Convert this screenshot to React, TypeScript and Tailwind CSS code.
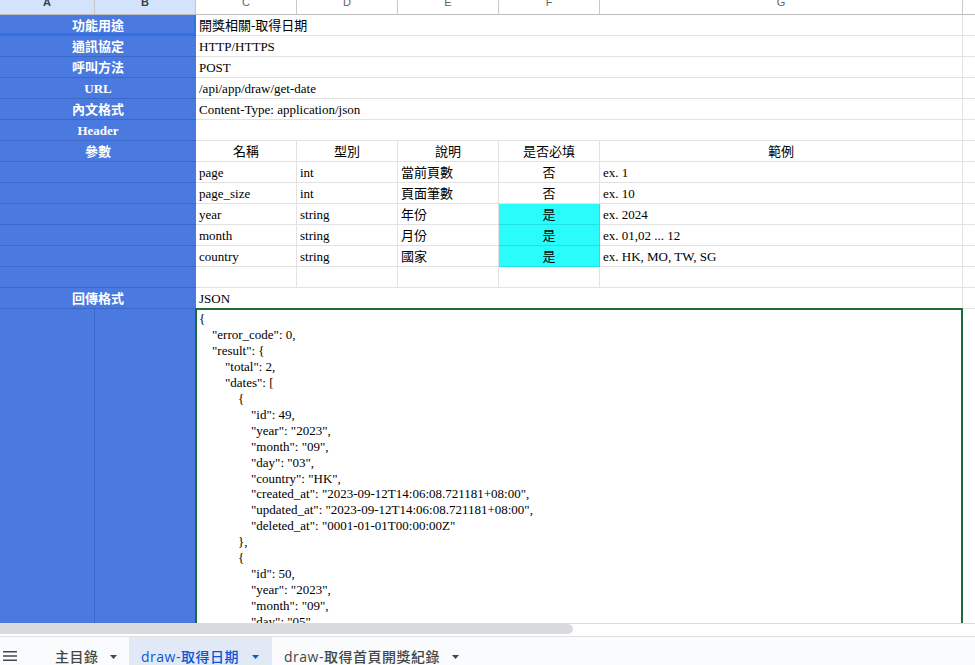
import React from "react";

const SERIF = "font-['Liberation_Serif','Noto_Sans_CJK_TC',serif]";

function Caret({ color }: { color: string }) {
  return (
    <svg width="7" height="4" viewBox="0 0 7 4" className="shrink-0">
      <path d="M0 0 L7 0 L3.5 4 Z" fill={color} />
    </svg>
  );
}

function HeadCell({ label, sel, last }: { label: string; sel?: boolean; last?: boolean }) {
  return (
    <div
      className={
        sel
          ? "overflow-hidden border-r border-b border-r-[#c7c7c7] border-b-[#bdbdbd] bg-[#d3e3fd] flex justify-center"
          : last
          ? "overflow-hidden border-b border-b-[#bdbdbd] bg-white flex justify-center"
          : "overflow-hidden border-r border-b border-r-[#c7c7c7] border-b-[#bdbdbd] bg-white flex justify-center"
      }
    >
      <span
        className={
          sel
            ? "-mt-[3px] block text-[11px] leading-[11px] font-semibold text-[#3c4043] font-['Liberation_Sans',sans-serif]"
            : "-mt-[3px] block text-[11px] leading-[11px] text-[#5f6368] font-['Liberation_Sans',sans-serif]"
        }
      >
        {label}
      </span>
    </div>
  );
}

function Label({ text, sel }: { text?: string; sel?: boolean }) {
  return (
    <div
      className={
        sel
          ? "col-span-2 overflow-hidden whitespace-nowrap bg-[#4a7adf] border-b border-[#3c68c7] text-white font-bold text-center text-[13px] leading-[16px] pt-[3px] shadow-[inset_0_-2px_0_#3370e4,inset_-2px_0_0_#3370e4]"
          : "col-span-2 overflow-hidden whitespace-nowrap bg-[#4a7adf] border-b border-[#3c68c7] text-white font-bold text-center text-[13px] leading-[16px] pt-[3px]"
      }
    >
      {text}
    </div>
  );
}

function Merged({ text }: { text?: string }) {
  return (
    <div className="col-span-5 overflow-hidden whitespace-nowrap border-r border-b border-[#e2e2e2] text-[13px] leading-[16px] pt-[3px] pl-[3px] text-black">
      {text}
    </div>
  );
}

function Cell({ text, center, cyan }: { text?: string; center?: boolean; cyan?: boolean }) {
  let cls =
    "overflow-hidden whitespace-nowrap border-r border-b border-[#e2e2e2] text-[13px] leading-[16px] pt-[3px] pl-[3px] text-black";
  if (center)
    cls =
      "overflow-hidden whitespace-nowrap border-r border-b border-[#e2e2e2] text-[13px] leading-[16px] pt-[3px] text-center text-black";
  if (cyan)
    cls =
      "overflow-hidden whitespace-nowrap border-r border-b border-[#1fe2e2] bg-[#2afbfb] text-[13px] leading-[16px] pt-[3px] text-center text-black";
  return <div className={cls}>{text}</div>;
}

function HCell() {
  return <div className="border-b border-[#e2e2e2]" />;
}

const json = [
  "{",
  '    "error_code": 0,',
  '    "result": {',
  '        "total": 2,',
  '        "dates": [',
  "            {",
  '                "id": 49,',
  '                "year": "2023",',
  '                "month": "09",',
  '                "day": "03",',
  '                "country": "HK",',
  '                "created_at": "2023-09-12T14:06:08.721181+08:00",',
  '                "updated_at": "2023-09-12T14:06:08.721181+08:00",',
  '                "deleted_at": "0001-01-01T00:00:00Z"',
  "            },",
  "            {",
  '                "id": 50,',
  '                "year": "2023",',
  '                "month": "09",',
  '                "day": "05",',
  '                "country": "HK",',
  '                "created_at": "2023-09-12T14:06:08.721181+08:00",',
  '                "updated_at": "2023-09-12T14:06:08.721181+08:00",',
  '                "deleted_at": "0001-01-01T00:00:00Z"',
  "            }",
  "        ]",
  "    }",
  "}",
];

const params = [
  ["page", "int", "當前頁數", "否", "ex. 1", false],
  ["page_size", "int", "頁面筆數", "否", "ex. 10", false],
  ["year", "string", "年份", "是", "ex. 2024", true],
  ["month", "string", "月份", "是", "ex. 01,02 ... 12", true],
  ["country", "string", "國家", "是", "ex. HK, MO, TW, SG", true],
] as const;

export default function App() {
  return (
    <div className="w-[975px] h-[665px] flex flex-col overflow-hidden bg-white">
      <div className="flex-1 overflow-hidden">
        <div
          className={
            "grid grid-cols-[95px_101px_101px_101px_101px_101px_363px_1fr] grid-rows-[15px_repeat(14,21px)_600px] " +
            SERIF
          }
        >
          {/* column header */}
          <HeadCell label="A" sel />
          <HeadCell label="B" sel />
          <HeadCell label="C" />
          <HeadCell label="D" />
          <HeadCell label="E" />
          <HeadCell label="F" />
          <HeadCell label="G" />
          <HeadCell label="" last />

          <Label text="功能用途" sel />
          <Merged text="開獎相關-取得日期" />
          <HCell />

          <Label text="通訊協定" />
          <Merged text="HTTP/HTTPS" />
          <HCell />

          <Label text="呼叫方法" />
          <Merged text="POST" />
          <HCell />

          <Label text="URL" />
          <Merged text="/api/app/draw/get-date" />
          <HCell />

          <Label text="內文格式" />
          <Merged text="Content-Type: application/json" />
          <HCell />

          <Label text="Header" />
          <Merged />
          <HCell />

          <Label text="參數" />
          <Cell text="名稱" center />
          <Cell text="型別" center />
          <Cell text="說明" center />
          <Cell text="是否必填" center />
          <Cell text="範例" center />
          <HCell />

          {params.map((p) => (
            <React.Fragment key={p[0]}>
              <Label />
              <Cell text={p[0]} />
              <Cell text={p[1]} />
              <Cell text={p[2]} />
              {p[5] ? <Cell text={p[3]} cyan /> : <Cell text={p[3]} center />}
              <Cell text={p[4]} />
              <HCell />
            </React.Fragment>
          ))}

          <Label />
          <Cell />
          <Cell />
          <Cell />
          <Cell />
          <Cell />
          <HCell />

          <Label text="回傳格式" />
          <Merged text="JSON" />
          <HCell />

          {/* JSON row */}
          <div className="bg-[#4a7adf] border-r border-[#3c68c7]" />
          <div className="bg-[#4a7adf]" />
          <div className="col-span-5 relative overflow-visible">
            <div className="absolute -top-px -left-px right-0 bottom-0 border-2 border-[#1d6b37]" />
            <div className="pt-[2px] pl-[3px] text-[13px] leading-[15.95px] text-black whitespace-pre">
              {json.map((l, i) => (
                <div key={i}>{l}</div>
              ))}
            </div>
          </div>
          <div className="border-b border-[#e2e2e2]" />
        </div>
      </div>

      {/* horizontal scrollbar */}
      <div className="h-[13px] shrink-0 border-t border-[#dadce0] bg-white">
        <div className="h-[10px] w-[573px] rounded-r-[5px] bg-[#d9dadd]" />
      </div>

      {/* sheet tabs */}
      <div className="h-[29px] shrink-0 border-t border-[#e0e0e0] bg-[#f9fbfd] overflow-hidden">
        <div className="flex h-[39px] items-stretch font-['Open_Sans','Noto_Sans_CJK_TC',sans-serif] text-[14px] leading-[20px] font-medium tracking-[0.5px]">
          <div className="w-[43px] flex items-center pl-[3px]">
            <svg width="14" height="10" viewBox="0 0 14 10" className="mb-[2px]">
              <rect x="0" y="0" width="14" height="1.5" fill="#444746" />
              <rect x="0" y="4.25" width="14" height="1.5" fill="#444746" />
              <rect x="0" y="8.5" width="14" height="1.5" fill="#444746" />
            </svg>
          </div>
          <div className="w-[86px] flex items-center pl-[12px] pr-[12px] text-[#444746]">
            <span>主目錄</span>
            <span className="ml-auto flex">
              <Caret color="#444746" />
            </span>
          </div>
          <div className="w-[143px] flex items-center pl-[12px] pr-[13px] bg-[#e1e9f7] text-[#0b57d0]">
            <span>draw-取得日期</span>
            <span className="ml-auto flex">
              <Caret color="#0b57d0" />
            </span>
          </div>
          <div className="w-[199px] flex items-center pl-[12px] pr-[12px] text-[#444746]">
            <span>draw-取得首頁開獎紀錄</span>
            <span className="ml-auto flex">
              <Caret color="#444746" />
            </span>
          </div>
        </div>
      </div>
    </div>
  );
}
